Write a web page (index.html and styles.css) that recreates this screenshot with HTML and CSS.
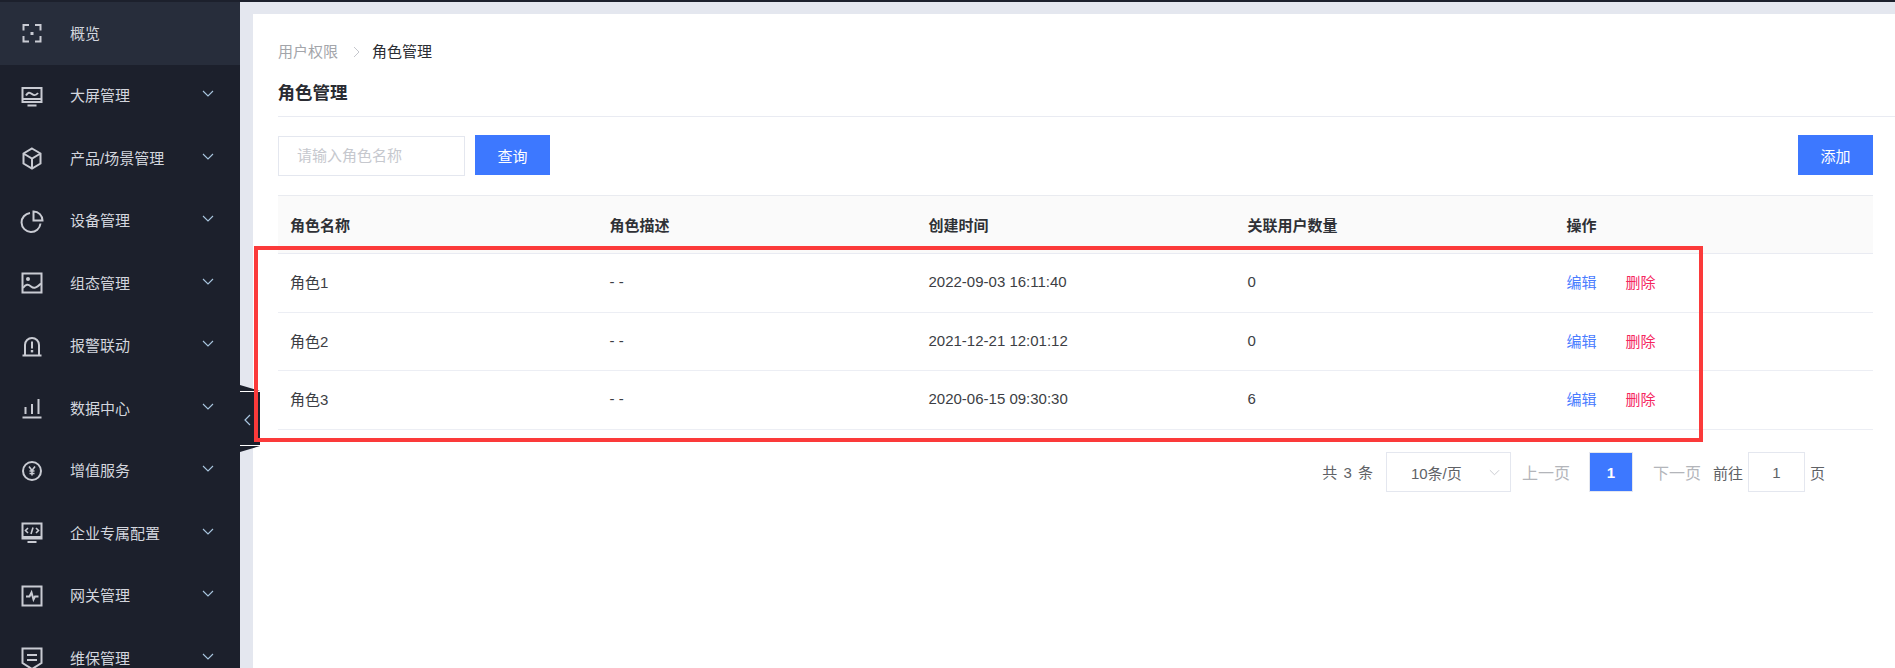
FILE: index.html
```html
<!DOCTYPE html>
<html lang="zh-CN">
<head>
<meta charset="utf-8">
<title>角色管理</title>
<link rel="stylesheet" href="styles.css">
</head>
<body>
<div class="app">
  <aside class="sidebar">
    <nav class="menu">
      <a class="menu-item active">
        <svg class="icon" viewBox="0 0 24 24"><path d="M9 4H3.500V9.500M15 4H20.500V9.500M3.500 15V20.500H9M20.500 15V20.500H15"/><rect class="fill" x="10.500" y="11" width="3" height="3"/></svg>
        <span class="label">概览</span>
      </a>
      <a class="menu-item">
        <svg class="icon" viewBox="0 0 24 24"><rect x="2.500" y="4" width="19" height="14"/><path d="M6 11.500c2-3.500 3.500-3.500 6-1.500s4 1.500 6-1M2 15h20M7.500 21.500h9"/></svg>
        <span class="label">大屏管理</span>
        <svg class="chev" viewBox="0 0 12 7"><path d="M1 1l5 5 5-5"/></svg>
      </a>
      <a class="menu-item">
        <svg class="icon" viewBox="0 0 24 24"><path d="M12 2.500l8.500 5v10l-8.500 5-8.500-5v-10zM3.500 7.500l8.500 5 8.500-5M12 12.500v10"/></svg>
        <span class="label">产品/场景管理</span>
        <svg class="chev" viewBox="0 0 12 7"><path d="M1 1l5 5 5-5"/></svg>
      </a>
      <a class="menu-item">
        <svg class="icon" viewBox="0 0 24 24"><path d="M10 4a9.500 9.500 0 1 0 10.500 10.500M13.500 2.500v9h9a9 9 0 0 0-9-9z"/></svg>
        <span class="label">设备管理</span>
        <svg class="chev" viewBox="0 0 12 7"><path d="M1 1l5 5 5-5"/></svg>
      </a>
      <a class="menu-item">
        <svg class="icon" viewBox="0 0 24 24"><rect x="2.500" y="2.500" width="19" height="19"/><circle class="fill" cx="8" cy="8" r="2"/><path d="M3 17c3-4 5-4 8-1.500s5 1.500 10-3"/></svg>
        <span class="label">组态管理</span>
        <svg class="chev" viewBox="0 0 12 7"><path d="M1 1l5 5 5-5"/></svg>
      </a>
      <a class="menu-item">
        <svg class="icon" viewBox="0 0 24 24"><path d="M5 20.500V11a7 7 0 0 1 14 0v9.500M2.500 21.500h19M12 7.500v7"/><rect class="fill" x="10.800" y="16" width="2.400" height="2.400"/></svg>
        <span class="label">报警联动</span>
        <svg class="chev" viewBox="0 0 12 7"><path d="M1 1l5 5 5-5"/></svg>
      </a>
      <a class="menu-item">
        <svg class="icon" viewBox="0 0 24 24"><path d="M5.500 11v7M12 8v10M18.500 3v15M2.500 21.500h19"/></svg>
        <span class="label">数据中心</span>
        <svg class="chev" viewBox="0 0 12 7"><path d="M1 1l5 5 5-5"/></svg>
      </a>
      <a class="menu-item">
        <svg class="icon" viewBox="0 0 24 24"><circle cx="12" cy="12" r="9"/><path class="thin" d="M9 7.500l3 4 3-4M12 11.500v5M9.500 12h5M9.500 14.500h5"/></svg>
        <span class="label">增值服务</span>
        <svg class="chev" viewBox="0 0 12 7"><path d="M1 1l5 5 5-5"/></svg>
      </a>
      <a class="menu-item">
        <svg class="icon" viewBox="0 0 24 24"><rect x="2.500" y="2.500" width="19" height="15"/><path d="M2 16h20M7.500 21h9"/><path class="thin" d="M8 7l-2.500 2.500L8 12M16 7l2.500 2.500L16 12M13 6.500l-2 6.500"/></svg>
        <span class="label">企业专属配置</span>
        <svg class="chev" viewBox="0 0 12 7"><path d="M1 1l5 5 5-5"/></svg>
      </a>
      <a class="menu-item">
        <svg class="icon" viewBox="0 0 24 24"><rect x="2.500" y="2.500" width="19" height="19"/><path d="M6 12.500h3.500l2-4 2 7 1.500-3h3.500"/></svg>
        <span class="label">网关管理</span>
        <svg class="chev" viewBox="0 0 12 7"><path d="M1 1l5 5 5-5"/></svg>
      </a>
      <a class="menu-item">
        <svg class="icon" viewBox="0 0 24 24"><path d="M2.500 2.500h19v14.500l-9.500 6-9.500-6zM7 9h10M7 14h10"/></svg>
        <span class="label">维保管理</span>
        <svg class="chev" viewBox="0 0 12 7"><path d="M1 1l5 5 5-5"/></svg>
      </a>
    </nav>
  </aside>
  <main class="main">
    <div class="card">
      <header class="page-head">
        <div class="crumbs">
          <span class="crumb-parent">用户权限</span>
          <svg class="crumb-sep" viewBox="0 0 7 12"><path d="M1 1l5 5-5 5"/></svg>
          <span class="crumb-current">角色管理</span>
        </div>
        <h1 class="page-title">角色管理</h1>
      </header>
      <section class="content">
        <div class="toolbar">
          <div class="search-input">请输入角色名称</div>
          <button class="btn">查询</button>
          <button class="btn btn-add">添加</button>
        </div>
        <table class="grid">
          <thead>
            <tr><th>角色名称</th><th>角色描述</th><th>创建时间</th><th>关联用户数量</th><th>操作</th></tr>
          </thead>
          <tbody>
            <tr><td>角色1</td><td>- -</td><td>2022-09-03 16:11:40</td><td>0</td><td><a class="link">编辑</a><a class="link danger">删除</a></td></tr>
            <tr><td>角色2</td><td>- -</td><td>2021-12-21 12:01:12</td><td>0</td><td><a class="link">编辑</a><a class="link danger">删除</a></td></tr>
            <tr><td>角色3</td><td>- -</td><td>2020-06-15 09:30:30</td><td>6</td><td><a class="link">编辑</a><a class="link danger">删除</a></td></tr>
          </tbody>
        </table>
        <div class="pager">
          <span class="total">共 3 条</span>
          <div class="size-select"><span>10条/页</span><svg class="size-chev" viewBox="0 0 12 7"><path d="M1 1l5 5 5-5"/></svg></div>
          <span class="page-nav prev">上一页</span>
          <span class="page-num">1</span>
          <span class="page-nav next">下一页</span>
          <span class="goto">前往</span>
          <span class="goto-input">1</span>
          <span class="goto-unit">页</span>
        </div>
      </section>
    </div>
  </main>
</div>
<div class="collapse-handle">
  <svg class="handle-chev" viewBox="0 0 7 12"><path d="M6 1L1 6l5 5"/></svg>
</div>
<div class="annotation"></div>
</body>
</html>
```
FILE: styles.css
```css
* { box-sizing: border-box; }
html, body { margin: 0; height: 100%; overflow: hidden; background: #fff; }
body {
  font-family: "Liberation Sans", "Noto Sans CJK SC", sans-serif;
  font-size: 15px;
  color: #333;
}
.app { display: flex; height: 668px; border-top: 2px solid #1c202c; }
.sidebar { width: 240px; flex: none; background: #1c202c; overflow: hidden; }
.menu { display: flex; flex-direction: column; }
.menu-item {
  height: 62.5px;
  flex: none;
  display: flex;
  align-items: center;
  padding-left: 19.5px;
  color: #d3d6de;
  position: relative;
}
.menu-item.active { background: #272d3b; }
.icon { width: 24px; height: 24px; flex: none; fill: none; stroke: #c9cbd3; stroke-width: 2; }
.icon .fill { fill: #c9cbd3; stroke: none; }
.icon .thin { stroke-width: 1.6; }
.label { margin-left: 26.5px; padding-top: 1px; line-height: 20px; }
.chev { width: 12px; height: 7px; margin-left: auto; margin-right: 26px; margin-top: -4px; fill: none; stroke: #a9c6e0; stroke-width: 1.1; flex: none; }
.main { flex: 1; background: #e4e7ef; padding: 12px 0 0 13px; min-width: 0; }
.card { background: #fff; height: 100%; padding-left: 25px; }
.page-head { border-bottom: 1.5px solid #e9ebf2; padding-top: 28px; padding-bottom: 11px; }
.crumbs { display: flex; align-items: center; height: 20px; line-height: 20px; }
.crumb-parent { color: #a3a5aa; }
.crumb-sep { width: 7px; height: 12px; margin: 0 12px 0 15px; fill: none; stroke: #c5c7cd; stroke-width: 1; }
.crumb-current { color: #2b2d33; }
.page-title { margin: 19px 0 0 -0.5px; font-size: 17.500px; line-height: 24px; font-weight: 700; color: #2a2c32; }
.content { padding-right: 22px; }
.toolbar { display: flex; align-items: flex-start; padding-top: 18px; height: 78px; }
.search-input {
  width: 187px; height: 40px; margin-top: 1px;
  border: 1px solid #e4e7ef;
  padding-left: 18px;
  line-height: 38px;
  color: #c6c8ce;
}
.btn {
  width: 75px; height: 40px; margin-left: 10px;
  border: 0; background: #3d78ff; color: #fff;
  font: inherit; padding: 0;
}
.btn-add { margin-left: auto; }
.grid { width: 100%; border-collapse: collapse; table-layout: fixed; }
.grid th, .grid td { text-align: left; padding: 0 0 0 12.500px; font-size: 15px; }
.grid th:first-child, .grid td:first-child { padding-left: 12px; }
.grid thead tr { height: 58px; }
.grid th { background: #fafafa; border-top: 1.5px solid #e9ebf0; border-bottom: 1.5px solid #e9ebf2; font-weight: 700; color: #2f3136; }
.grid tbody tr { height: 58.700px; }
.grid td { border-bottom: 1.5px solid #eceef4; color: #3c3e44; padding-bottom: 3px; }
.link { color: #4a7cff; display: inline-block; width: 59px; }
.link.danger { color: #f5275f; }
.pager { display: flex; align-items: center; height: 40px; margin-top: 22px; color: #606266; padding-right: 48px; }
.total { margin-left: auto; word-spacing: 2px; padding-bottom: 2px; }
.size-select {
  width: 125px; height: 40px; margin-left: 13px;
  border: 1px solid #e4e7ef;
  display: flex; align-items: center;
  padding-left: 24px;
}
.size-chev { width: 11px; height: 7px; margin-left: auto; margin-right: 10px; fill: none; stroke: #c6c8ce; stroke-width: 1; }
.page-nav { color: #b3b5ba; font-size: 16px; }
.prev { margin-left: 11px; }
.page-num {
  width: 44px; height: 40px; margin-left: 19px;
  background: #3d78ff; color: #fff; font-weight: 700;
  border: 1px solid #e4e7ef;
  display: flex; align-items: center; justify-content: center;
}
.next { margin-left: 20px; }
.goto { margin-left: 12px; }
.goto-input {
  width: 57px; height: 40px; margin-left: 5px;
  border: 1px solid #e4e7ef;
  display: flex; align-items: center; justify-content: center;
}
.goto-unit { margin-left: 5px; }
.collapse-handle {
  position: absolute; left: 240px; top: 385px; width: 20px; height: 67px;
  background: #1c202c;
  clip-path: polygon(0 0, 100% 6px, 100% 61px, 0 100%);
}
.collapse-handle::before, .collapse-handle::after {
  content: ""; position: absolute; left: 0; width: 100%; height: 1px; background: #fff;
}
.collapse-handle::before { top: 6px; }
.collapse-handle::after { top: 60px; }
.handle-chev { position: absolute; left: 3.5px; top: 28.5px; width: 7px; height: 12px; fill: none; stroke: #a9c6e0; stroke-width: 1.2; }
.annotation {
  position: absolute; left: 254px; top: 246px; width: 1449px; height: 196px;
  border: 4px solid #fb3a3a;
}
```
